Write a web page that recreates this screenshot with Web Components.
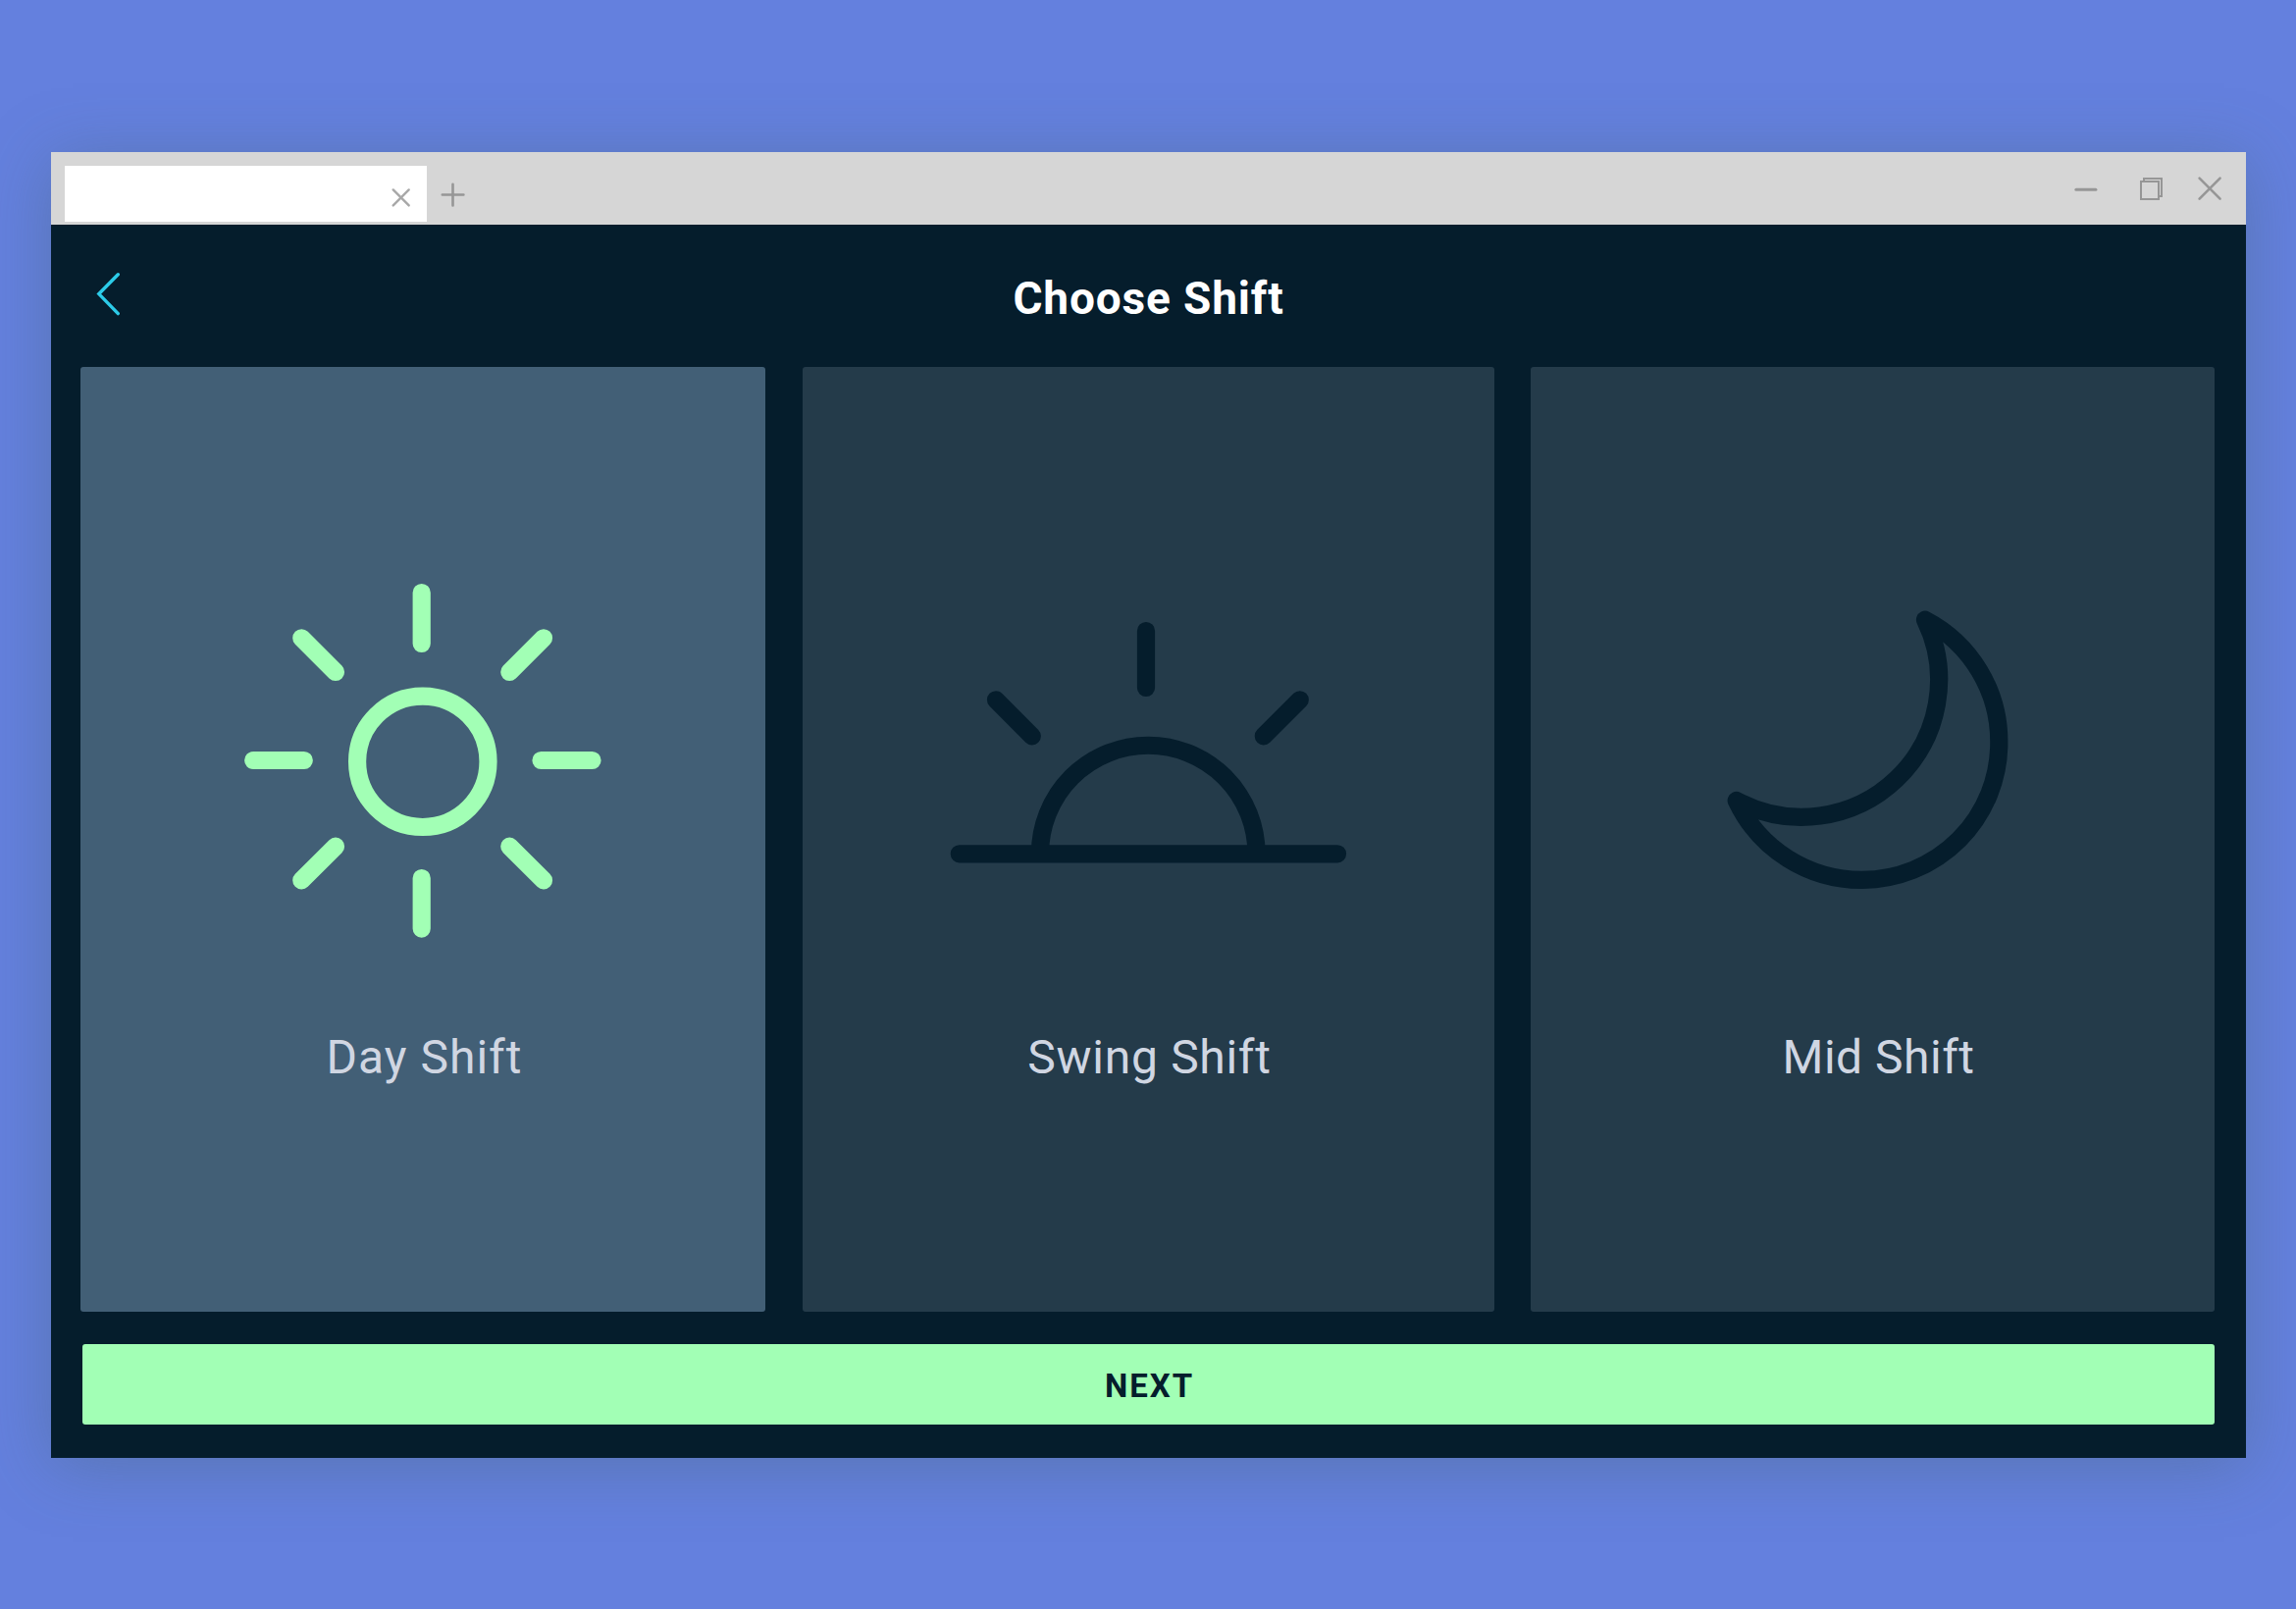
<!DOCTYPE html>
<html lang="en">
<head>
<meta charset="utf-8">
<title>Choose Shift</title>
<style>
  html, body {
    margin: 0;
    height: 100%;
  }
  body {
    box-sizing: border-box;
    height: 1640px;
    padding: 155px 51px 154px 52px;
    overflow: hidden;
    background: #6480de;
    font-family: Roboto, "Liberation Sans", sans-serif;
  }
</style>
</head>
<body>
<browser-window>
  <shift-header slot="header">Choose Shift</shift-header>
  <shift-picker>
    <shift-card icon="day" selected>Day Shift</shift-card>
    <shift-card icon="swing">Swing Shift</shift-card>
    <shift-card icon="mid">Mid Shift</shift-card>
  </shift-picker>
  <next-button slot="footer">NEXT</next-button>
</browser-window>

<script>
class BrowserWindow extends HTMLElement {
  constructor() {
    super()
    this.attachShadow({ mode: 'open' })
    this.shadowRoot.innerHTML = `
    <style>
      :host{
        display:flex;
        flex-direction:column;
        height:1331px;
        background-color:#051d2c;
        box-shadow:0 8px 64px rgba(65,95,95,.34);
      }
      .bar{
        box-sizing:border-box;
        display:flex;
        flex:none;
        height:74px;
        padding:14px 23px 3px 14px;
        background-color:#d6d6d6;
      }
      .tab{
        box-sizing:border-box;
        width:369px;
        height:57px;
        padding:22px 16px 0 0;
        background-color:#fff;
      }
      svg{
        display:block;
        fill:none;
        stroke:#969696;
        stroke-linecap:round;
      }
      .tab svg{
        margin-left:auto;
        stroke:#a8a8a8;
      }
      .add{
        margin:17px 0 0 14px;
      }
      .controls{
        display:flex;
        margin:10px 0 0 auto;
        height:26px;
      }
      .content{
        display:flex;
        flex-direction:column;
        flex:1;
        padding:0 32px 34px 30px;
      }
    </style>
    <div class="bar">
      <div class="tab">
        <svg width="21" height="21" stroke-width="2.4"><path d="M2.7 2.4l16 16M18.7 2.4l-16 16"/></svg>
      </div>
      <svg class="add" width="25" height="25" stroke-width="2.6"><path d="M12.5 1.8v21.6M1.8 12.5h21.6"/></svg>
      <div class="controls">
        <svg width="26" height="28" stroke-width="3"><path d="M3.9 14.3h20"/></svg>
        <svg width="28" height="28" style="margin-left:41px" stroke-width="2" stroke-linecap="butt"><path d="M3 6h18v18H3zM6 6V3h18v18h-3"/></svg>
        <svg width="28" height="28" style="margin-left:31px" stroke-width="2.6"><path d="M3.6 2.6l21 21M24.6 2.6l-21 21"/></svg>
      </div>
    </div>
    <div class="content">
      <slot name="header"></slot>
      <slot></slot>
      <slot name="footer"></slot>
    </div>
  `
  }
}

class ShiftHeader extends HTMLElement {
  constructor() {
    super()
    this.attachShadow({ mode: 'open' })
    this.shadowRoot.innerHTML = `
    <style>
      :host{
        display:grid;
        grid-template-columns:60px 1fr 60px;
        height:145px;
        flex:none;
      }
      svg{
        margin:47px 0 0 16px;
        fill:none;
        stroke:#2ccbe8;
        stroke-width:3.4;
        stroke-linecap:round;
      }
      h1{
        margin:45px 0 0;
        padding-left:2px;
        color:#fff;
        font-size:46px;
        font-weight:700;
        line-height:60px;
        letter-spacing:.85px;
        text-align:center;
        white-space:nowrap;
      }
    </style>
    <svg width="26" height="46"><path d="M22.3 3.8L2.8 23.6l19.5 20"/></svg>
    <h1><slot></slot></h1>
  `
  }
}

class ShiftPicker extends HTMLElement {
  constructor() {
    super()
    this.attachShadow({ mode: 'open' })
    this.shadowRoot.innerHTML = `
    <style>
      :host{
        display:grid;
        grid-template-columns:698px 705px 697px;
        column-gap:37.5px;
        height:962.6px;
        flex:none;
      }
    </style>
    <slot></slot>
  `
  }
}

const icons = {
  day: `<svg viewBox="221 590 420 372">
      <circle cx="430.8" cy="776.3" r="66.7"/>
      <path d="M429.7 604v52M429.7 895v51.6M258.2 775h51.6M551.5 775h52M307.3 650.3L342 685M554 650.3L519.3 685M342 862.7l-34.7 34.6M519.3 862.7l34.7 34.6"/>
    </svg>`,
  swing: `<svg viewBox="960 590 420 372">
      <path d="M1060 870A110.25 110.25 0 0 1 1280.5 870M977.8 870.3H1363M1168 643v58M1015 713.3l36.8 37M1324.8 713.3l-37 37"/>
    </svg>`,
  mid: `<svg viewBox="1699 590 420 372">
      <path d="M1962 631.7A140 140 0 0 1 2037.3 757.3A139.5 139.5 0 0 1 1898.3 896.8A141 141 0 0 1 1769.7 816A139.9 139.9 0 0 0 1962 631.7z"/>
    </svg>`
}

class ShiftCard extends HTMLElement {
  constructor() {
    super()
    this.attachShadow({ mode: 'open' })
    this.shadowRoot.innerHTML = `
    <style>
      :host{
        box-sizing:border-box;
        display:flex;
        flex-direction:column;
        align-items:center;
        padding-top:216px;
        border-radius:3px;
        background-color:#243b4a;
        color:#d0d6e2;
        --icon-color:#051d2c;
      }
      :host([selected]){
        background-color:#425f76;
        --icon-color:#a2ffb5;
      }
      svg{
        display:block;
        width:420px;
        height:372px;
        fill:none;
        stroke:var(--icon-color);
        stroke-width:18.2;
        stroke-linecap:round;
        stroke-linejoin:round;
      }
      .label{
        margin-top:84px;
        padding-left:3px;
        font-size:48px;
        line-height:64px;
        letter-spacing:1px;
        white-space:nowrap;
      }
      :host([icon="swing"]) .label{
        letter-spacing:.7px;
      }
      :host([icon="mid"]) .label{
        padding-left:12px;
        letter-spacing:.5px;
      }
    </style>
    ${icons[this.getAttribute('icon')]}
    <div class="label"><slot></slot></div>
  `
  }
}

class NextButton extends HTMLElement {
  constructor() {
    super()
    this.attachShadow({ mode: 'open' })
    this.shadowRoot.innerHTML = `
    <style>
      :host{
        display:flex;
        height:82px;
        margin:33px 0 0 2px;
        flex:none;
      }
      button{
        flex:1;
        padding:4px 0 0 2px;
        border:0;
        border-radius:3px;
        background-color:#a2ffb5;
        color:#051d2c;
        font:700 33px/40px Roboto, "Liberation Sans", sans-serif;
        letter-spacing:2px;
      }
    </style>
    <button type="button"><slot></slot></button>
  `
  }
}

window.customElements.define('browser-window', BrowserWindow)
window.customElements.define('shift-header', ShiftHeader)
window.customElements.define('shift-picker', ShiftPicker)
window.customElements.define('shift-card', ShiftCard)
window.customElements.define('next-button', NextButton)
</script>
</body>
</html>
